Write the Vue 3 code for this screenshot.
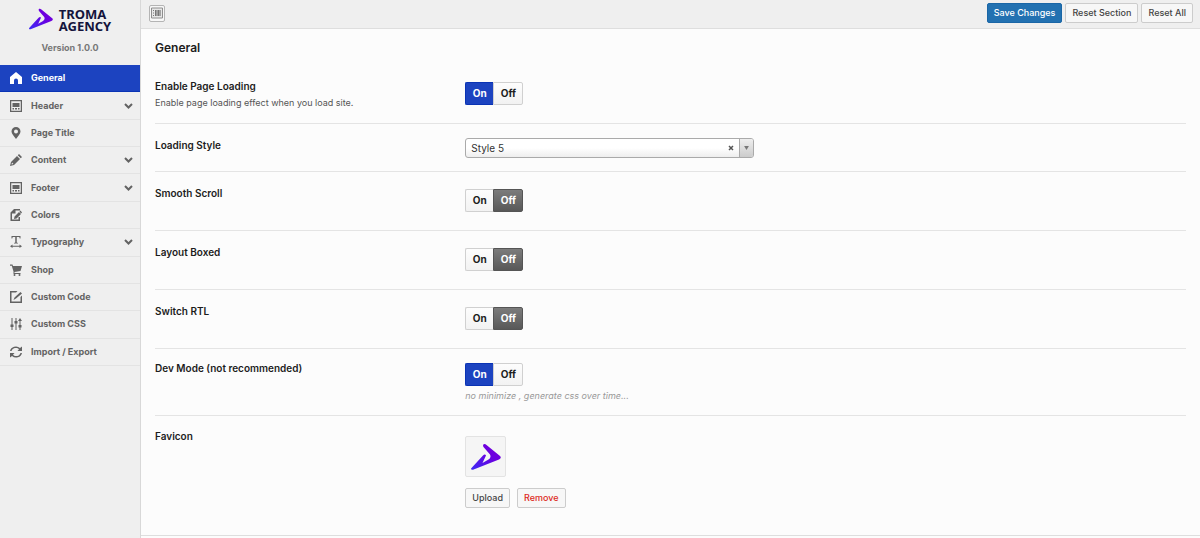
<template>
  <div class="panel">
    <aside class="sidebar">
      <div class="brand">
        <svg class="brand-mark" viewBox="0 0 30 26" aria-hidden="true">
          <defs>
            <linearGradient id="brand-fill" x1="0" y1="1" x2="1" y2="0">
              <stop offset="0" stop-color="#3d2bf5" />
              <stop offset="0.6" stop-color="#6a00e0" />
              <stop offset="1" stop-color="#7a00d8" />
            </linearGradient>
          </defs>
          <path :d="markPath" fill="url(#brand-fill)" />
        </svg>
        <div class="brand-name">
          <div>TROMA</div>
          <div>AGENCY</div>
        </div>
      </div>
      <p class="version">Version 1.0.0</p>

      <nav class="menu">
        <a
          v-for="item in menu"
          :key="item.label"
          href="#"
          :class="['menu-item', { active: item.label === section }]"
          @click.prevent="section = item.label"
        >
          <svg class="menu-icon" viewBox="0 0 24 24" aria-hidden="true">
            <path :d="icons[item.icon]" fill-rule="evenodd" />
          </svg>
          <span>{{ item.label }}</span>
          <svg v-if="item.sub" class="chevron" viewBox="0 0 9 6" aria-hidden="true">
            <path d="M1 1l3.500 3.500L8 1" />
          </svg>
        </a>
      </nav>
    </aside>

    <main class="content">
      <header class="toolbar">
        <button type="button" class="expand" aria-label="Expand options">
          <svg viewBox="0 0 12 12" aria-hidden="true">
            <path d="M.5 1h11v10H.5z" fill="#e6e6e6" stroke="#8e8e8e" />
            <path d="M2 3h1v1H2zM2 5.500h1v1H2zM2 8h1v1H2z" fill="#777" />
            <path d="M4 3h6v6H4z" fill="#a2a2a2" />
            <path d="M4 3h1v6H4zM7 3h1v6H7z" fill="#777" />
          </svg>
        </button>
        <div class="actions">
          <button type="button" class="btn primary">Save Changes</button>
          <button type="button" class="btn">Reset Section</button>
          <button type="button" class="btn">Reset All</button>
        </div>
      </header>

      <form class="fields" @submit.prevent>
        <h1>General</h1>

        <div
          v-for="field in fields"
          :key="field.id"
          :class="['field', field.type, { noted: field.note }]"
        >
          <div class="field-label">
            <label v-if="field.type === 'select'" :for="field.id">{{ field.title }}</label>
            <h2 v-else :id="field.id">{{ field.title }}</h2>
            <p v-if="field.subtitle">{{ field.subtitle }}</p>
          </div>

          <div class="field-control">
            <div
              v-if="field.type === 'switch'"
              class="toggle"
              role="radiogroup"
              :aria-labelledby="field.id"
            >
              <label class="on">
                <input v-model="field.value" type="radio" :name="field.id" :value="true">
                <span>On</span>
              </label>
              <label class="off">
                <input v-model="field.value" type="radio" :name="field.id" :value="false">
                <span>Off</span>
              </label>
            </div>

            <div v-else-if="field.type === 'select'" class="picker">
              <select :id="field.id" v-model="field.value">
                <option value=""></option>
                <option v-for="n in 8" :key="n">Style {{ n }}</option>
              </select>
              <button type="button" class="clear" aria-label="Clear" @click="field.value = ''">
                <svg viewBox="0 0 6 6" aria-hidden="true"><path d="M1 1l4 4M5 1L1 5" /></svg>
              </button>
              <span class="arrow">
                <svg viewBox="0 0 6 5" aria-hidden="true"><path d="M0 0h6L3 5z" /></svg>
              </span>
            </div>

            <template v-else>
              <div class="preview">
                <svg viewBox="0 0 30 26" aria-hidden="true">
                  <path :d="markPath" fill="url(#brand-fill)" />
                </svg>
              </div>
              <div class="media-actions">
                <button type="button" class="btn">Upload</button>
                <button type="button" class="btn remove">Remove</button>
              </div>
            </template>

            <p v-if="field.note" class="note">{{ field.note }}</p>
          </div>
        </div>
      </form>
    </main>
  </div>
</template>

<script setup>
import { reactive, ref } from 'vue'

const section = ref('General')

const markPath =
  'M12.700 .3Q14-.3 15.500 1L29 12Q31 14 28 15.500L2 25.800Q-1 26 .5 24L12 11.500Q14 9.500 15 11.500L11.500 19L17.500 15.500Q20.500 13.500 19 10.500L12.500 3Q11.500 1.200 12.700 .3Z'

const menu = [
  { label: 'General', icon: 'home' },
  { label: 'Header', icon: 'layout', sub: true },
  { label: 'Page Title', icon: 'pin' },
  { label: 'Content', icon: 'pencil', sub: true },
  { label: 'Footer', icon: 'layout', sub: true },
  { label: 'Colors', icon: 'page' },
  { label: 'Typography', icon: 'type', sub: true },
  { label: 'Shop', icon: 'cart' },
  { label: 'Custom Code', icon: 'edit' },
  { label: 'Custom CSS', icon: 'sliders' },
  { label: 'Import / Export', icon: 'sync' },
]

const icons = {
  home: 'M12 0l12 10v14h-8v-7a4 4 0 0 0-8 0v7H0V10z',
  layout: 'M0 0h24v24H0zM2.500 2.500v19h19v-19zM5 6h14v8H5zM5 16h3v3H5zM10 16h4v3h-4zM16 16h3v3h-3z',
  pin: 'M12 0a9 9 0 0 1 9 9c0 5-5 9-9 15C8 18 3 14 3 9a9 9 0 0 1 9-9zM12 5a4 4 0 1 0 0 8 4 4 0 0 0 0-8z',
  pencil: 'M0 24l2-8L14 4l6 6L8 22zM3 21l4-1-3-3zM15.500 2.500L18 0l6 6-2.500 2.500z',
  page: 'M8 0h12v3h-9v6H4v12h13v-5h3v8H1V7zM9 15l9-9 4 4-9 9-5 1zM19 5l2-2 3 4-2 2z',
  type: 'M3 0h18v5h-1.500l-1-3h-5v11l2.500 1v1H8v-1l2.500-1V2h-5l-1 3H3zM5 17v2.500h14V17l5 3.500-5 3.500v-2.500H5V24l-5-3.500z',
  cart: 'M0 1h5l1 3h18l-3 10-12 2v2h12v2H7v-5L3.500 3.500H0zM9 20a2 2 0 1 1 0 4 2 2 0 0 1 0-4zM19 20a2 2 0 1 1 0 4 2 2 0 0 1 0-4z',
  edit: 'M0 0h15l-3 3H3v18h18v-9l3-3v15H0zM21 2l3 3L12 15l-5 3 2-5z',
  sliders: 'M3 0h2v13h2v5H5v6H3v-6H1v-5h2zM11 0h2v6h2v5h-2v13h-2V11H9V6h2zM19 6h-3l4-6 4 6h-3v8h2v5h-2v5h-2v-5h-2v-5h2z',
  sync: 'M0 10A12 11.500 0 0 1 20 4l4-3v9h-9l3-3.500A9 9 0 0 0 3 10zM24 14A12 11.500 0 0 1 4 20l-4 3v-9h9l-3 3.500A9 9 0 0 0 21 14z',
}

const fields = reactive([
  {
    id: 'page-loading',
    type: 'switch',
    title: 'Enable Page Loading',
    subtitle: 'Enable page loading effect when you load site.',
    value: true,
  },
  { id: 'loading-style', type: 'select', title: 'Loading Style', value: 'Style 5' },
  { id: 'smooth-scroll', type: 'switch', title: 'Smooth Scroll', value: false },
  { id: 'layout-boxed', type: 'switch', title: 'Layout Boxed', value: false },
  { id: 'switch-rtl', type: 'switch', title: 'Switch RTL', value: false },
  {
    id: 'dev-mode',
    type: 'switch',
    title: 'Dev Mode (not recommended)',
    note: 'no minimize , generate css over time...',
    value: true,
  },
  { id: 'favicon', type: 'media', title: 'Favicon' },
])
</script>

<style>
body {
  margin: 0;
  background: #fcfcfc;
}
</style>

<style scoped>
.panel {
  display: flex;
  min-height: 100vh;
  font-family: Inter, "Liberation Sans", sans-serif;
  font-size: 9px;
  line-height: 14px;
  color: #1d1d1d;
}

.panel * {
  box-sizing: border-box;
}

h1,
h2,
p {
  margin: 0;
}

button,
select {
  font: inherit;
  cursor: pointer;
}

.sidebar {
  flex: 0 0 141px;
  background: #efefef;
  border-right: 1px solid #d8d8d8;
}

.brand {
  display: flex;
  justify-content: center;
  gap: 6px;
  padding-top: 8px;
}

.brand-mark {
  width: 24px;
  height: 22px;
}

.brand-name {
  font: bold 13px/12px "Noto Sans", sans-serif;
  color: #14143c;
}

.version {
  padding: 9px 0 10px;
  color: #777;
  font-weight: 700;
  text-align: center;
}

.menu {
  display: grid;
  grid-auto-rows: 1fr;
  height: 301px;
}

.menu-item {
  display: flex;
  align-items: center;
  gap: 9px;
  padding: 0 7px 0 10px;
  color: #636363;
  font-weight: 700;
  text-decoration: none;
  border-bottom: 1px solid #e3e3e3;
}

.menu-item.active {
  color: #fff;
  background: #1c43c0;
  border-color: #0a33b4;
}

.menu-icon {
  width: 12px;
  height: 12px;
  fill: currentColor;
}

.chevron {
  width: 9px;
  height: 6px;
  margin-left: auto;
  fill: none;
  stroke: currentColor;
  stroke-width: 2;
}

.content {
  flex: 1;
  min-width: 0;
}

.toolbar {
  display: flex;
  justify-content: space-between;
  align-items: center;
  padding: 3px 7px 5px 8px;
  background: #efefef;
  border-bottom: 1px solid #dedede;
}

.expand {
  display: grid;
  place-items: center;
  width: 16px;
  height: 17px;
  padding: 0;
  background: #f7f7f7;
  border: 1px solid #b4b4b4;
  border-radius: 2px;
}

.expand svg {
  width: 12px;
  height: 12px;
}

.actions {
  display: flex;
  gap: 3px;
}

.btn {
  height: 20px;
  padding: 0 6px;
  color: #444;
  font-weight: 500;
  line-height: 18px;
  background: #f7f7f7;
  border: 1px solid #ccc;
  border-radius: 2px;
}

.primary {
  color: #fff;
  background: #2271b1;
  border-color: #1a66a6;
}

.fields {
  padding: 11px 14px 0;
  border-bottom: 1px solid #dedede;
}

h1 {
  padding-bottom: 9px;
  font-size: 12px;
  font-weight: 600;
  line-height: 16px;
}

.field {
  display: grid;
  grid-template-columns: 30% 1fr;
  min-height: 59px;
  padding: 14px 0 10px;
  border-bottom: 1px solid #e4e4e4;
}

.field.noted {
  padding: 12px 0;
}

.field.select {
  min-height: 48px;
}

.field.media {
  min-height: 119px;
  padding-top: 13px;
  border-bottom: 0;
}

.field-control {
  padding-left: 1px;
}

.switch .field-control {
  padding-top: 3px;
}

.noted .field-control {
  padding-top: 2px;
}

.media .field-control {
  padding-top: 7px;
}

.field-label h2,
.field-label label {
  display: block;
  font-size: 10px;
  font-weight: 600;
  line-height: 14px;
}

.field-label p {
  padding-top: 3px;
  color: #555;
}

.toggle {
  display: grid;
  grid-template-columns: 28px 1fr;
  width: 58px;
  height: 23px;
  font-size: 10px;
  font-weight: 700;
  text-align: center;
}

.toggle label {
  cursor: pointer;
}

.toggle input {
  position: absolute;
  opacity: 0;
}

.toggle span {
  display: block;
  line-height: 21px;
  background: linear-gradient(#fdfdfd, #f2f2f2);
  border: 1px solid #d0d0d0;
}

.on span {
  border-right: 0;
  border-radius: 2px 0 0 2px;
}

.off span {
  border-radius: 0 2px 2px 0;
}

.on input:checked + span {
  color: #fff;
  background: #1c43c0;
  border-color: #0a33b4;
}

.off input:checked + span {
  color: #fff;
  background: linear-gradient(#7c7c7c, #585858);
  border-color: #555;
}

.note {
  padding-top: 3px;
  color: #999;
  font-style: italic;
}

.picker {
  display: flex;
  width: 40%;
  height: 20px;
  overflow: hidden;
  background: linear-gradient(#fff 50%, #eee);
  border: 1px solid #aaa;
  border-radius: 3px;
}

.picker select {
  flex: 1;
  padding: 0 5px;
  color: #333;
  font-size: 10px;
  appearance: none;
  background: none;
  border: 0;
}

.clear {
  width: 16px;
  padding: 0;
  line-height: 0;
  background: none;
  border: 0;
}

.clear svg {
  width: 6px;
  height: 6px;
  stroke: #555;
  stroke-width: 1.5;
}

.arrow {
  display: grid;
  place-items: center;
  width: 14px;
  background: linear-gradient(#eee, #ccc);
  border-left: 1px solid #aaa;
}

.arrow svg {
  width: 5px;
  height: 4px;
  fill: #777;
}

.preview {
  display: grid;
  place-items: center;
  width: 41px;
  height: 41px;
  background: #f5f5f5;
  border: 1px solid #e3e3e3;
  border-radius: 2px;
}

.preview svg {
  width: 30px;
  height: 26px;
}

.media-actions {
  display: flex;
  gap: 7px;
  padding-top: 11px;
}

.remove {
  color: #dd2a1b;
}
</style>
